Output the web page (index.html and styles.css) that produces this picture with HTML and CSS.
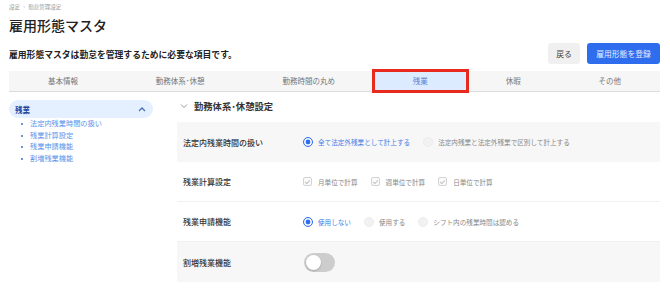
FILE: index.html
```html
<!DOCTYPE html>
<html lang="ja">
<head>
    <meta charset="UTF-8">
    <meta name="viewport" content="width=device-width, initial-scale=1.0">
    <title>雇用形態マスタ</title>
    <link rel="stylesheet" href="styles.css">
</head>
<body>
    <div class="page">
        <div class="breadcrumb">設定 <span class="sep">›</span> 勤怠管理設定</div>
        <h1 class="page-title">雇用形態マスタ</h1>

        <div class="page-head">
            <p class="lead">雇用形態マスタは勤怠を管理するために必要な項目です。</p>
            <div class="actions">
                <button class="btn btn-back">戻る</button>
                <button class="btn btn-primary">雇用形態を登録</button>
            </div>
        </div>

        <div class="tabs">
            <div class="tab">基本情報</div>
            <div class="tab">勤務体系･休憩</div>
            <div class="tab">勤務時間の丸め</div>
            <div class="tab active">残業</div>
            <div class="tab">休暇</div>
            <div class="tab">その他</div>
        </div>

        <div class="layout">
            <aside class="sidebar">
                <div class="side-head">
                    <span>残業</span>
                    <svg class="chev-up" width="8" height="6" viewBox="0 0 8 6">
                        <path d="M1 5 L4 2 L7 5" fill="none" stroke="#4f6fb5" stroke-width="1.3"/>
                    </svg>
                </div>
                <ul class="side-list">
                    <li>法定内残業時間の扱い</li>
                    <li>残業計算設定</li>
                    <li>残業申請機能</li>
                    <li>割増残業機能</li>
                </ul>
            </aside>

            <main class="main">
                <div class="section-title">
                    <svg class="chev-down" width="8" height="6" viewBox="0 0 8 6">
                        <path d="M1 1.5 L4 4.5 L7 1.5" fill="none" stroke="#999" stroke-width="1"/>
                    </svg>
                    <span>勤務体系･休憩設定</span>
                </div>

                <div class="rows">
                    <div class="row shaded">
                        <div class="row-label">法定内残業時間の扱い</div>
                        <div class="options">
                            <label class="opt checked"><span class="radio"></span>全て法定外残業として計上する</label>
                            <label class="opt"><span class="radio"></span>法定内残業と法定外残業で区別して計上する</label>
                        </div>
                    </div>

                    <div class="row">
                        <div class="row-label">残業計算設定</div>
                        <div class="options">
                            <label class="opt"><span class="check"></span>月単位で計算</label>
                            <label class="opt"><span class="check"></span>週単位で計算</label>
                            <label class="opt"><span class="check"></span>日単位で計算</label>
                        </div>
                    </div>

                    <div class="row">
                        <div class="row-label">残業申請機能</div>
                        <div class="options">
                            <label class="opt checked"><span class="radio"></span>使用しない</label>
                            <label class="opt"><span class="radio"></span>使用する</label>
                            <label class="opt"><span class="radio"></span>シフト内の残業時間は認める</label>
                        </div>
                    </div>

                    <div class="row shaded">
                        <div class="row-label">割増残業機能</div>
                        <div class="options">
                            <span class="toggle"><span class="knob"></span></span>
                        </div>
                    </div>
                </div>
            </main>
        </div>
    </div>
</body>
</html>
```

FILE: styles.css
```css
* {
    margin: 0;
    padding: 0;
    box-sizing: border-box;
}

body {
    font-family: "Noto Sans CJK JP", "Noto Sans", sans-serif;
    background: #fff;
    color: #333;
}

.page {
    padding: 3px 10px 0 9px;
}

.breadcrumb {
    font-size: 5.5px;
    line-height: 8px;
    color: #999;
}

.breadcrumb .sep {
    margin: 0 2px;
}

.page-title {
    font-size: 14px;
    line-height: 18px;
    font-weight: 500;
    color: #222;
    margin-top: 5px;
}

.page-head {
    display: flex;
    justify-content: space-between;
    align-items: center;
    margin-top: 9px;
}

.lead {
    font-size: 8.8px;
    font-weight: 700;
    color: #222;
    margin-top: 1px;
}

.actions {
    display: flex;
    gap: 7px;
}

.btn {
    font-family: inherit;
    font-size: 7.8px;
    height: 21px;
    border: none;
    border-radius: 3px;
    padding: 0 8px;
}

.btn-back {
    background: #f0f0f0;
    color: #444;
    width: 32px;
    padding: 0;
}

.btn-primary {
    background: #2f6def;
    color: #e8eeff;
    width: 73px;
    padding: 0;
}

.tabs {
    display: flex;
    margin-top: 7px;
    height: 21px;
    background: #f6f6f6;
    border-bottom: 1px solid #dcdcdc;
}

.tab {
    flex: 1 1 auto;
    text-align: center;
    font-size: 7.5px;
    line-height: 20px;
    color: #777;
}

.tab.active {
    background: #dcebff;
    color: #5b7fd0;
    outline: 3px solid #e8291d;
    outline-offset: -1px;
}

.layout {
    display: grid;
    grid-template-columns: 144px 1fr;
    gap: 24px;
    margin-top: 8px;
}

.side-head {
    display: flex;
    justify-content: space-between;
    align-items: center;
    height: 18px;
    padding: 0 7px 0 6px;
    background: #e4f0ff;
    border-radius: 9px;
    font-size: 7.5px;
    font-weight: 700;
    color: #23409a;
}

.side-list {
    list-style: none;
    padding-left: 12px;
}

.side-list li {
    position: relative;
    font-size: 7.2px;
    line-height: 11.7px;
    color: #5c95ea;
    padding-left: 9px;
}

.side-list li::before {
    content: "";
    position: absolute;
    left: 0;
    top: 5px;
    width: 2px;
    height: 2px;
    border-radius: 50%;
    background: #3c6fc8;
}

.section-title {
    display: flex;
    align-items: center;
    gap: 6px;
    height: 12px;
    padding-left: 3px;
    font-size: 9.3px;
    font-weight: 700;
    color: #333;
}

.rows {
    margin-top: 10px;
}

.row {
    display: grid;
    grid-template-columns: 120px 1fr;
    align-items: center;
    height: 40px;
    padding-left: 6px;
    border-bottom: 1px solid #f1f1f1;
}

.row.shaded {
    background: #f7f7f7;
    border-bottom: none;
}

.row-label {
    font-size: 8px;
    font-weight: 500;
    color: #333;
}

.options {
    display: flex;
    align-items: center;
    gap: 13px;
    font-size: 6.6px;
    color: #888;
}

.opt {
    display: flex;
    align-items: center;
    gap: 5px;
}

.opt.checked {
    color: #3f7ee6;
}

.radio {
    width: 10px;
    height: 10px;
    border-radius: 50%;
    background: #f2f2f2;
    border: 1px solid #ececec;
}

.opt.checked .radio {
    background: #fff;
    border: 1.3px solid #2f6def;
    box-shadow: inset 0 0 0 1.6px #fff, inset 0 0 0 5px #2f6def;
}

.check {
    position: relative;
    width: 9px;
    height: 9px;
    border: 1px solid #d4d4d4;
    border-radius: 2px;
    background: #fafafa;
    margin-right: 1px;
}

.check::after {
    content: "";
    position: absolute;
    left: 2.3px;
    top: 0.8px;
    width: 2px;
    height: 4px;
    border-right: 0.8px solid #c4c4c4;
    border-bottom: 0.8px solid #c4c4c4;
    transform: rotate(45deg);
}

.toggle {
    position: relative;
    display: block;
    width: 31px;
    height: 19px;
    border-radius: 10px;
    background: #cdcdcd;
    margin-left: 1px;
}

.knob {
    position: absolute;
    left: 2px;
    top: 2px;
    width: 15px;
    height: 15px;
    border-radius: 50%;
    background: #fff;
    box-shadow: 0 1px 2px rgba(0, 0, 0, 0.2);
}
```
